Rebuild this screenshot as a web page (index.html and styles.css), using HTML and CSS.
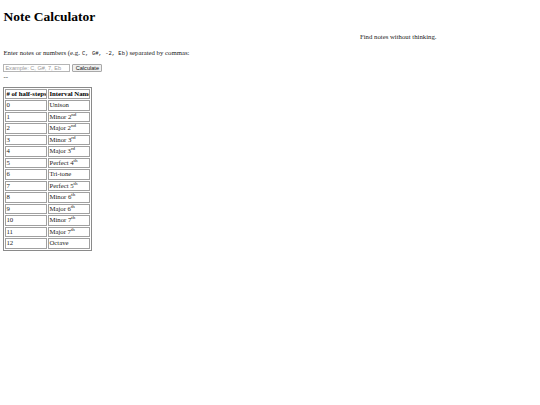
FILE: index.html
```html
<!DOCTYPE html>
<html>
<head>
<meta charset="utf-8">
<title>Note Calculator</title>
<link rel="stylesheet" href="styles.css">
</head>
<body>
<h1 class="title">Note Calculator</h1>
<p class="subtitle">Find notes without thinking.</p>
<p class="prompt">Enter notes or numbers (e.g. <code class="examples">C, G#, -2, Eb</code>) separated by commas:</p>
<div class="form">
  <input class="notes-input" type="text" placeholder="Example: C, G#, 7, Eb"><button class="calc-btn">Calculate</button>
</div>
<div class="result">--</div>
<table class="intervals">
  <colgroup><col class="col-steps"><col class="col-name"></colgroup>
  <tr><th># of half-steps</th><th>Interval Name</th></tr>
  <tr><td>0</td><td>Unison</td></tr>
  <tr><td>1</td><td>Minor 2<sup>nd</sup></td></tr>
  <tr><td>2</td><td>Major 2<sup>nd</sup></td></tr>
  <tr><td>3</td><td>Minor 3<sup>rd</sup></td></tr>
  <tr><td>4</td><td>Major 3<sup>rd</sup></td></tr>
  <tr><td>5</td><td>Perfect 4<sup>th</sup></td></tr>
  <tr><td>6</td><td>Tri-tone</td></tr>
  <tr><td>7</td><td>Perfect 5<sup>th</sup></td></tr>
  <tr><td>8</td><td>Minor 6<sup>th</sup></td></tr>
  <tr><td>9</td><td>Major 6<sup>th</sup></td></tr>
  <tr><td>10</td><td>Minor 7<sup>th</sup></td></tr>
  <tr><td>11</td><td>Major 7<sup>th</sup></td></tr>
  <tr><td>12</td><td>Octave</td></tr>
</table>
</body>
</html>
```
FILE: styles.css
```css
body {
  margin: 0;
  padding: 3px 3.4px;
  font-family: "Liberation Serif", "Times New Roman", serif;
  font-size: 6.75px;
  line-height: 8px;
  color: #1a1a1a;
  background: #fff;
}
.title {
  font-size: 13.5px;
  line-height: 16px;
  margin: 6px 0 8px;
  color: #000;
}
.subtitle {
  margin: 8px 0 8px;
  padding-left: 356.6px;
}
.prompt {
  margin: 8px 0 6px;
}
.examples {
  font-family: "Liberation Mono", "Courier New", monospace;
  font-size: 5.5px;
  padding: 0 0.5px;
}
.form {
  display: flex;
  align-items: center;
  gap: 2px;
  height: 8px;
}
.notes-input {
  box-sizing: border-box;
  width: 67px;
  height: 8px;
  margin: 0;
  padding: 0 1px;
  border: 1px solid #b5b5b5;
  font-family: "Liberation Sans", Arial, sans-serif;
  font-size: 5.6px;
  line-height: 6px;
}
.notes-input::placeholder {
  color: #999;
}
.calc-btn {
  box-sizing: border-box;
  width: 30px;
  height: 8px;
  margin: 0;
  padding: 0;
  border: 1px solid #a8a8a8;
  border-radius: 1px;
  background: #efefef;
  font-family: "Liberation Sans", Arial, sans-serif;
  font-size: 5.6px;
  line-height: 6px;
  color: #111;
}
.result {
  margin: 0.5px 0 6px;
}
.intervals {
  table-layout: fixed;
  width: 89px;
  border: 1px solid #8a8a8a;
  border-spacing: 1px;
}
.col-steps,
.col-name {
  width: 50%;
}
.intervals th, .intervals td {
  text-align: left;
  border: 1px solid #a0a0a0;
  padding: 0;
  height: 8.5px;
  line-height: 8.5px;
  font-size: 6.75px;
  white-space: nowrap;
  overflow: hidden;
}
.intervals th {
  font-weight: bold;
  color: #000;
}
.intervals sup {
  font-size: 5px;
  line-height: 0;
  vertical-align: 2.6px;
}
```
